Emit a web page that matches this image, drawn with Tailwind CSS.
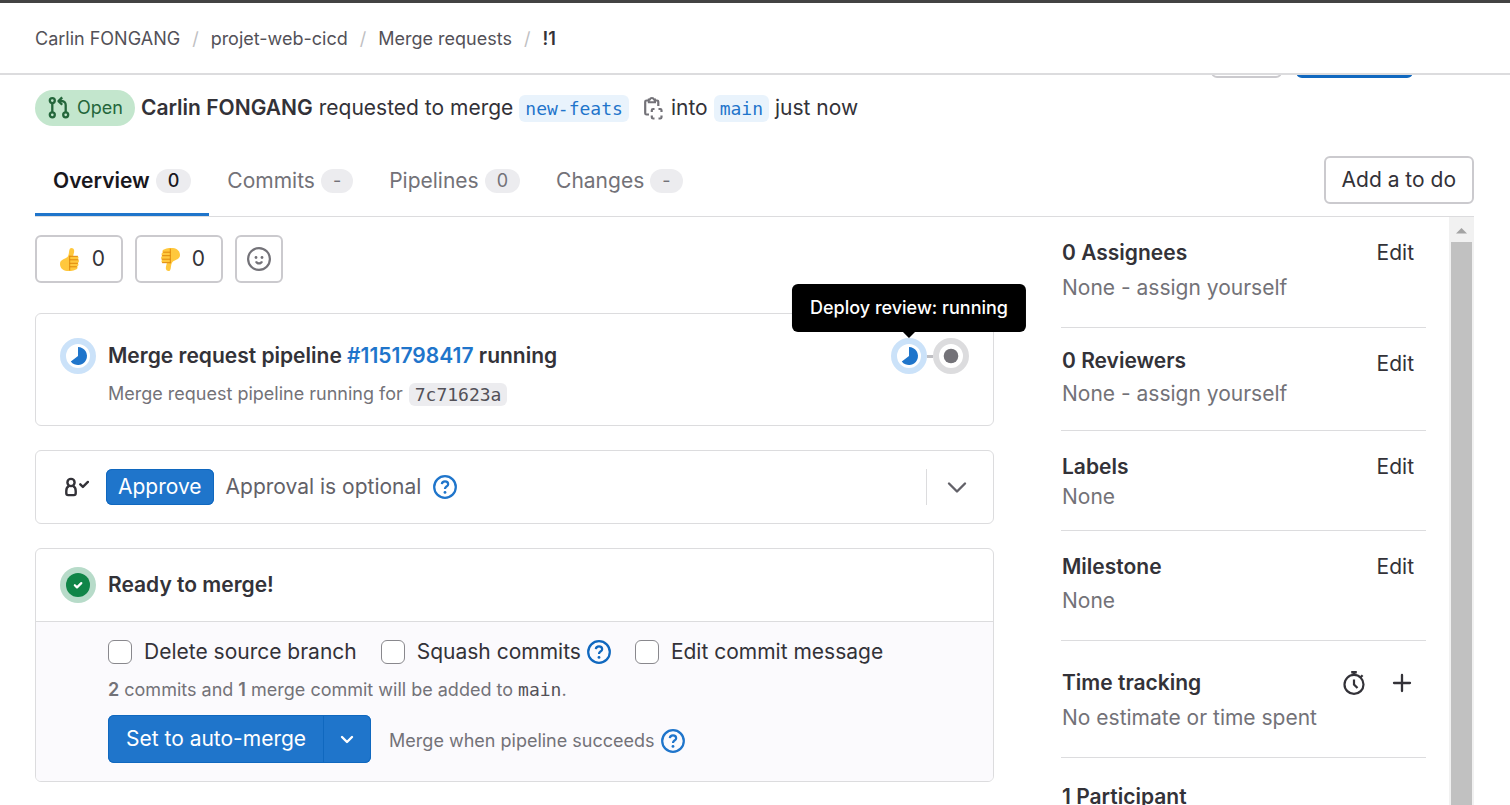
<!DOCTYPE html>
<html lang="en">
<head>
<meta charset="utf-8">
<meta name="viewport" content="width=device-width, initial-scale=1">
<title>Merge request !1 · projet-web-cicd</title>
<script src="https://cdn.jsdelivr.net/npm/@tailwindcss/browser@4"></script>
</head>
<body class="flex h-screen flex-col overflow-hidden bg-white font-['Inter',sans-serif] text-[21px] leading-[30px] text-[#333238]">

<!-- Shared icon symbols -->
<svg class="hidden" aria-hidden="true">
  <symbol id="help" viewBox="0 0 16 16">
    <circle cx="8" cy="8" r="7.2" fill="none" stroke="currentColor" stroke-width="1.5"/>
    <path d="M5.9 6.1c.1-1.1 1-1.8 2.100-1.800 1.200 0 2.100.7 2.100 1.800 0 .8-.5 1.200-1.100 1.600-.6.400-.95.700-.95 1.350v.2" fill="none" stroke="currentColor" stroke-width="1.5"/>
    <circle cx="8" cy="11.600" r=".95" fill="currentColor"/>
  </symbol>
  <symbol id="running" viewBox="0 0 36 36">
    <circle cx="18" cy="18" r="15" fill="#fff" stroke="#cbe2f9" stroke-width="6"/>
    <path d="M18 18V9a9 9 0 1 1-7.200 14.400z" fill="#1f75cb"/>
  </symbol>
  <symbol id="thumb" viewBox="0 0 24 24">
    <path d="M11.500 10C13.500 7.500 12.600 3.400 14 1.600c1.200-1.300 3.700-.6 4.100 1.600.3 2-.6 4-.9 5.800h3.600c1.900 0 2.300 2.500.9 3.300 1.600.6 1.600 3.100 0 3.600 1.200.9.900 3-.4 3.500.6 1.200 0 2.700-1.300 3-2.600 1.500-6 2-9 1.500C6.500 23.300 4 20.500 4 16.900 4 12.500 8.500 12.500 11.500 10z" fill="#ffc83d"/>
    <path d="M13.700 9v14M14 9.300h7.500M14 12.800h8M14 16.300h7.500M14 19.800h6.500" fill="none" stroke="#dd8208" stroke-width=".9" stroke-linecap="round"/>
  </symbol>
</svg>

<header class="shrink-0 border-t-[3px] border-t-[#434343] border-b-2 border-b-[#dcdcde] px-[35px]">
  <nav aria-label="Breadcrumb" class="flex h-[70px] items-center gap-3 pt-[2px] text-lg leading-6 text-[#535158]">
    <a href="#">Carlin FONGANG</a>
    <span class="text-[#bfbfc3]">/</span>
    <a href="#">projet-web-cicd</a>
    <span class="text-[#bfbfc3]">/</span>
    <a href="#">Merge requests</a>
    <span class="text-[#bfbfc3]">/</span>
    <a href="#" class="font-semibold text-[#333238]">!1</a>
  </nav>
</header>

<main class="flex min-h-0 flex-1 flex-col pr-9 pl-[35px]">
  <!-- Title actions, scrolled under the header -->
  <div class="flex h-[3px] shrink-0 items-end justify-end gap-[14px] overflow-hidden pr-[61px]">
    <button aria-label="Edit" class="h-12 w-[71px] shrink-0 rounded-md border-2 border-[#cbcace]"></button>
    <button aria-label="Code" class="h-12 w-[117px] shrink-0 rounded-md bg-[#1068bf]"></button>
  </div>

  <div class="mt-3 flex h-9 shrink-0 items-center gap-[6px] whitespace-nowrap">
    <span class="flex h-9 items-center gap-[6px] rounded-full bg-[#c3e6cd] px-3 text-lg text-[#24663b]">
      <svg class="size-6" viewBox="0 0 24 24" fill="none" stroke="currentColor" stroke-width="2.300">
        <circle cx="5.300" cy="4.600" r="2.500"/><circle cx="5.300" cy="18.800" r="2.500"/><circle cx="18.700" cy="18.800" r="2.500"/>
        <path d="M5.300 7v9.500M18.700 16.500V9a4 4 0 0 0-4-4h-2.500"/><path d="m15.200 1.400-3.700 3.700 3.700 3.700" stroke-linejoin="round"/>
      </svg>
      Open
    </span>
    <a href="#" class="font-semibold">Carlin FONGANG</a>
    <span>requested to merge</span>
    <a href="#" class="rounded-md bg-[#e9f3fc] px-[6px] font-['DejaVu_Sans_Mono',monospace] text-lg leading-[27px] text-[#1f75cb]">new-feats</a>
    <button aria-label="Copy branch name" class="ml-[6px] text-[#737278]">
      <svg class="size-6" viewBox="0 0 24 24" fill="none" stroke="currentColor" stroke-width="2.200">
        <path d="M8 18.500H5.500a1.300 1.300 0 0 1-1.300-1.300V5.800a1.300 1.300 0 0 1 1.300-1.300H8M13.500 4.500H16a1.300 1.300 0 0 1 1.300 1.300V10"/>
        <path d="M7.800 6.300V3.600h1a2.200 2.200 0 0 1 4.200 0h1v2.700z" stroke-width="2"/>
        <path d="M10.800 16v-1.700a1.300 1.300 0 0 1 1.300-1.300h1.400M17.500 13h1.700a1.300 1.300 0 0 1 1.300 1.300V16M20.500 19.500v1.700a1.300 1.300 0 0 1-1.300 1.300h-1.700M13.500 22.500h-1.400a1.300 1.300 0 0 1-1.300-1.300v-1.700"/>
      </svg>
    </button>
    <span>into</span>
    <a href="#" class="rounded-md bg-[#e9f3fc] px-[6px] font-['DejaVu_Sans_Mono',monospace] text-lg leading-[27px] text-[#1f75cb]">main</a>
    <span>just now</span>
  </div>

  <div class="mt-[18px] flex h-[73px] shrink-0 items-stretch border-b border-[#dcdcde] text-[#737278]">
    <a href="#" class="flex items-center gap-[6px] border-b-[3px] border-[#1f75cb] px-[18px] pt-1 font-semibold text-[#18171d]">Overview <span class="h-6 rounded-full bg-[#ececef] px-3 text-lg leading-6 font-medium">0</span></a>
    <a href="#" class="flex items-center gap-[6px] px-[18px] pt-px">Commits <span class="h-6 rounded-full bg-[#ececef] px-3 text-lg leading-6">-</span></a>
    <a href="#" class="flex items-center gap-[6px] px-[18px] pt-px">Pipelines <span class="h-6 rounded-full bg-[#ececef] px-3 text-lg leading-6">0</span></a>
    <a href="#" class="flex items-center gap-[6px] px-[18px] pt-px">Changes <span class="h-6 rounded-full bg-[#ececef] px-3 text-lg leading-6">-</span></a>
    <button class="ml-auto h-12 self-center rounded-md border-2 border-[#cbcace] px-4 text-[#333238]">Add a to do</button>
  </div>

  <div class="flex min-h-0 flex-1 gap-[67px]">
    <section class="min-w-0 flex-1 pt-[18px]">
      <div class="flex gap-3">
        <button class="flex h-12 w-[88px] items-center justify-end gap-3 rounded-md border-2 border-[#cbcace] pr-4"><svg class="size-6" role="img" aria-label="Thumbs up"><use href="#thumb"/></svg>0</button>
        <button class="flex h-12 w-[88px] items-center justify-end gap-3 rounded-md border-2 border-[#cbcace] pr-4"><svg class="size-6 overflow-visible" viewBox="0 0 24 24" role="img" aria-label="Thumbs down"><use href="#thumb" width="24" height="24" transform="translate(28 25) rotate(180)"/></svg>0</button>
        <button aria-label="Add reaction" class="flex size-12 items-center justify-center rounded-md border-2 border-[#cbcace] text-[#737278]">
          <svg class="size-6" viewBox="0 0 24 24" fill="none" stroke="currentColor" stroke-width="2.200">
            <circle cx="12" cy="12" r="10.900"/><circle cx="9" cy="10.500" r="1.400" fill="currentColor" stroke="none"/><circle cx="15" cy="10.500" r="1.400" fill="currentColor" stroke="none"/><path d="M9 14.300a3.200 3.200 0 0 0 6 0"/>
          </svg>
        </button>
      </div>

      <article class="mt-[30px] flex gap-3 rounded-md border border-[#dcdcde] px-6 pt-6 pb-[19px]">
        <svg class="size-9 shrink-0"><use href="#running"/></svg>
        <div class="min-w-0 flex-1">
          <h2 class="leading-9 font-semibold">Merge request pipeline <a href="#" class="text-[#1f75cb]">#1151798417</a> running</h2>
          <p class="mt-2 flex h-6 items-center gap-[6px] text-lg leading-6 text-[#737278]">Merge request pipeline running for <a href="#" class="rounded-md bg-[#ececef] px-[6px] font-['DejaVu_Sans_Mono',monospace] leading-[23px] text-[#535158]">7c71623a</a></p>
        </div>
        <div class="flex h-9 items-center">
          <button aria-label="Deploy review: running" class="relative size-9">
            <svg class="size-9"><use href="#running"/></svg>
            <span role="tooltip" class="absolute bottom-full left-1/2 mb-[6px] -translate-x-1/2 rounded-md bg-black px-[18px] py-[9px] text-lg leading-[30px] whitespace-nowrap font-medium text-white">Deploy review: running
              <span class="absolute top-full left-1/2 -translate-x-1/2 border-x-[6px] border-t-[6px] border-x-transparent border-t-black"></span>
            </span>
          </button>
          <span class="h-[3px] w-[6px] bg-[#bfbfc3]"></span>
          <button aria-label="Created" class="size-9">
            <svg class="size-9" viewBox="0 0 36 36"><circle cx="18" cy="18" r="15" fill="#fff" stroke="#dcdcde" stroke-width="6"/><circle cx="18" cy="18" r="7.300" fill="#737278"/></svg>
          </button>
        </div>
      </article>

      <article class="mt-6 flex h-[74px] items-center gap-3 rounded-md border border-[#dcdcde] pr-6 pl-6">
        <span class="flex w-[34px] justify-center">
          <svg class="size-6" viewBox="0 0 24 24" fill="none" stroke="currentColor" stroke-width="2.400" stroke-linejoin="round">
            <circle cx="6" cy="7.500" r="3.600"/><path d="M3.800 11.200C2 12 1.300 13.500 1.300 16v2.300a1.800 1.800 0 0 0 1.800 1.800h5.800a1.800 1.800 0 0 0 1.800-1.800V16c0-2.500-.7-4-2.500-4.800"/><path d="m15.300 9.300 2.600 2.600 5-5" stroke-linecap="round"/>
          </svg>
        </span>
        <button class="h-9 rounded-md bg-[#1f75cb] px-3 text-white inset-ring inset-ring-[#1068bf]">Approve</button>
        <span class="text-[#626168]">Approval is optional</span>
        <button aria-label="Help" class="text-[#1f75cb]"><svg class="size-6"><use href="#help"/></svg></button>
        <button aria-label="Expand" class="ml-auto flex h-9 items-center border-l border-[#dcdcde] pl-[18px] text-[#626168]">
          <svg class="size-6" viewBox="0 0 24 24" fill="none" stroke="currentColor" stroke-width="2.400" stroke-linecap="round" stroke-linejoin="round"><path d="m4 8.500 8 8 8-8"/></svg>
        </button>
      </article>

      <article class="mt-6 overflow-hidden rounded-md border border-[#dcdcde]">
        <div class="flex h-[73px] items-center gap-3 border-b border-[#dcdcde] px-6">
          <svg class="size-9" viewBox="0 0 36 36"><circle cx="18" cy="18" r="18" fill="#b7dbc9"/><circle cx="18" cy="18" r="12" fill="#108548"/><path d="m14.800 18.200 2.200 2.200 4.300-4.300" fill="none" stroke="#fff" stroke-width="2.200" stroke-linecap="round" stroke-linejoin="round"/></svg>
          <h2 class="font-semibold">Ready to merge!</h2>
        </div>
        <div class="bg-[#fbfafd] pt-[15px] pr-6 pb-[18px] pl-[72px]">
          <div class="flex items-center gap-6">
            <label class="flex items-center gap-3"><input type="checkbox" class="size-6 appearance-none rounded-md border border-[#89888d] bg-white">Delete source branch</label>
            <div class="flex items-center gap-[6px]">
              <label class="flex items-center gap-3"><input type="checkbox" class="size-6 appearance-none rounded-md border border-[#89888d] bg-white">Squash commits</label>
              <button aria-label="Help with squashing" class="text-[#1068bf]"><svg class="size-6"><use href="#help"/></svg></button>
            </div>
            <label class="flex items-center gap-3"><input type="checkbox" class="size-6 appearance-none rounded-md border border-[#89888d] bg-white">Edit commit message</label>
          </div>
          <p class="mt-[11px] text-lg leading-6 text-[#737278]"><b class="font-semibold">2</b> commits and <b class="font-semibold">1</b> merge commit will be added to <span class="font-['DejaVu_Sans_Mono',monospace] text-[#535158]">main</span>.</p>
          <div class="mt-[13px] flex items-center">
            <button class="h-12 rounded-l-md bg-[#1f75cb] px-[18px] text-white inset-ring inset-ring-[#1068bf]">Set to auto-merge</button>
            <button aria-label="Merge options" class="-ml-px flex h-12 w-12 items-center justify-center rounded-r-md bg-[#1f75cb] text-white inset-ring inset-ring-[#1068bf]">
              <svg class="size-6" viewBox="0 0 24 24" fill="none" stroke="currentColor" stroke-width="2.400" stroke-linecap="round" stroke-linejoin="round"><path d="m7 10 5 5 5-5"/></svg>
            </button>
            <div class="ml-[18px] flex items-center gap-[6px] pt-[3px]">
              <span class="text-lg text-[#737278]">Merge when pipeline succeeds</span>
              <button aria-label="Help with auto-merge" class="text-[#1f75cb]"><svg class="size-6"><use href="#help"/></svg></button>
            </div>
          </div>
        </div>
      </article>
    </section>

    <aside class="flex w-[413px] shrink-0 justify-between overflow-hidden">
      <div class="w-[365px] text-[#737278] *:border-b *:border-[#dcdcde] *:pl-px">
        <section class="pt-[21px] pb-6">
          <div class="flex justify-between pr-3 text-[#333238]"><h3 class="font-semibold">0 Assignees</h3><button>Edit</button></div>
          <p class="mt-[5px]">None - <button>assign yourself</button></p>
        </section>
        <section class="pt-[18px] pb-[21px]">
          <div class="flex h-[30px] justify-between pr-3 text-[#333238]"><h3 class="font-semibold">0 Reviewers</h3><button class="mt-[3px]">Edit</button></div>
          <p class="mt-[3px]">None - <button>assign yourself</button></p>
        </section>
        <section class="pt-[21px] pb-[18px]">
          <div class="flex justify-between pr-3 text-[#333238]"><h3 class="font-semibold">Labels</h3><button>Edit</button></div>
          <p>None</p>
        </section>
        <section class="pt-[21px] pb-6">
          <div class="flex justify-between pr-3 text-[#333238]"><h3 class="font-semibold">Milestone</h3><button>Edit</button></div>
          <p class="mt-1">None</p>
        </section>
        <section class="pt-[27px] pb-6">
          <div class="flex items-center gap-6 pr-3 text-[#333238]">
            <h3 class="mr-auto font-semibold">Time tracking</h3>
            <button aria-label="Time tracking report"><svg class="size-6" viewBox="0 0 24 24" fill="none" stroke="currentColor" stroke-width="2.200"><circle cx="12" cy="13.400" r="9.500"/><path d="M12 8.500v5l3.500 3.500"/><path d="M9.200 1.200h5.600M12 1v3" stroke-width="2.800"/><path d="m18.600 6.200 2-2"/></svg></button>
            <button aria-label="Add time entry"><svg class="size-6" viewBox="0 0 24 24" fill="none" stroke="currentColor" stroke-width="2.300" stroke-linecap="round"><path d="M12 4v16M4 12h16"/></svg></button>
          </div>
          <p class="mt-[5px]">No estimate or time spent</p>
        </section>
        <section class="pt-6">
          <h3 class="font-semibold text-[#333238]">1 Participant</h3>
        </section>
      </div>
      <!-- Scrollbar -->
      <div class="flex w-[25px] flex-col items-center bg-[#f1f1f1]">
        <svg class="h-[25px] w-[25px] shrink-0" viewBox="0 0 25 25"><path d="M7 16.500 12.500 11l5.500 5.500z" fill="#a3a3a3"/></svg>
        <div class="w-[21px] flex-1 bg-[#c1c1c1]"></div>
      </div>
    </aside>
  </div>
</main>
</body>
</html>
